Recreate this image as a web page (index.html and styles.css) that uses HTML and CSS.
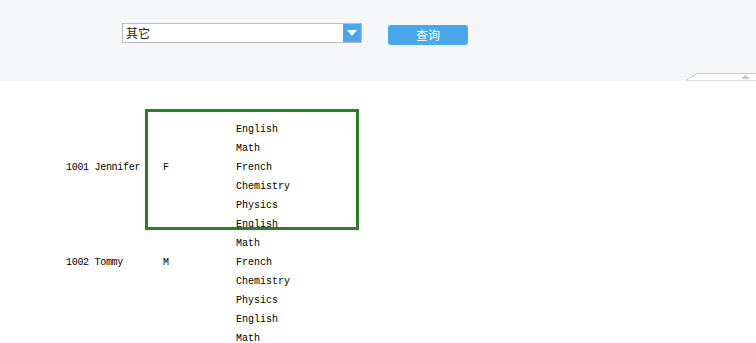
FILE: index.html
```html
<!DOCTYPE html>
<html>
<head>
<meta charset="utf-8">
<link rel="stylesheet" href="styles.css">
</head>
<body>
<div class="header">
  <div class="form">
    <div class="select">
      <span class="select-text">其它</span>
      <span class="select-btn"><svg width="10" height="6" viewBox="0 0 10 6"><path d="M0 0H10L5 6Z" fill="#fff"/></svg></span>
    </div>
    <button class="query">查询</button>
  </div>
  <svg class="tab" width="70" height="9" viewBox="0 0 70 9">
    <path d="M0 8.5L11 1.5H70V8.5Z" fill="#fff"/>
    <path d="M0 8.5L11 1.5H70" fill="none" stroke="#c8c8c8" stroke-width="1"/>
    <path d="M0 8.5H70" fill="none" stroke="#dcdcdc" stroke-width="1"/>
    <path d="M55 7L59.5 2.5L64 7Z" fill="#c8c8c8"/>
  </svg>
</div>
<div class="content">
  <div class="table">
    <div class="row">
      <div class="c-name">1001 Jennifer</div>
      <div class="c-sex">F</div>
      <div class="c-course">
        <div>English</div><div>Math</div><div>French</div><div>Chemistry</div><div>Physics</div>
      </div>
    </div>
    <div class="row">
      <div class="c-name">1002 Tommy</div>
      <div class="c-sex">M</div>
      <div class="c-course">
        <div>English</div><div>Math</div><div>French</div><div>Chemistry</div><div>Physics</div>
      </div>
    </div>
    <div class="row">
      <div class="c-name"></div>
      <div class="c-sex"></div>
      <div class="c-course">
        <div>English</div><div>Math</div>
      </div>
    </div>
  </div>
  <div class="highlight"></div>
</div>
</body>
</html>
```
FILE: styles.css
```css
html, body {
  margin: 0;
  padding: 0;
  background: #fff;
  overflow: hidden;
}
body {
  width: 756px;
  height: 343px;
  font-family: "Liberation Mono", "DejaVu Sans Mono", monospace;
}
.header {
  position: relative;
  height: 81px;
  background: #f5f6f8;
}
.form {
  display: flex;
  align-items: flex-start;
  padding: 23px 0 0 122px;
}
.select {
  display: flex;
  width: 240px;
  height: 20px;
  box-sizing: border-box;
  border: 1px solid #b8bcc6;
  background: #fff;
}
.select-text {
  flex: 1;
  font-family: "Noto Sans CJK SC", sans-serif;
  font-size: 12px;
  line-height: 18px;
  padding-left: 3px;
  color: #222;
}
.select-btn {
  width: 18px;
  background: #4aa8e8;
  display: flex;
  align-items: center;
  justify-content: center;
}
.query {
  margin: 2px 0 0 26px;
  width: 80px;
  height: 20px;
  border: none;
  border-radius: 3px;
  background: #4aa8ea;
  color: #fff;
  font-family: "Noto Sans CJK SC", sans-serif;
  font-size: 12px;
  line-height: 20px;
  padding: 0;
}
.tab {
  position: absolute;
  right: 0;
  bottom: 0;
  display: block;
}
.content {
  position: relative;
  padding-top: 39px;
}
.table {
  font-size: 10px;
  color: #000;
  line-height: 19px;
}
.row {
  display: flex;
  align-items: center;
}
.c-name {
  width: 97px;
  padding-left: 66px;
  white-space: pre;
  letter-spacing: -0.3px;
}
.c-sex {
  width: 73px;
}
.highlight {
  position: absolute;
  left: 145px;
  top: 28px;
  width: 208px;
  height: 115px;
  border: 3px solid #2e7d2e;
}
```
